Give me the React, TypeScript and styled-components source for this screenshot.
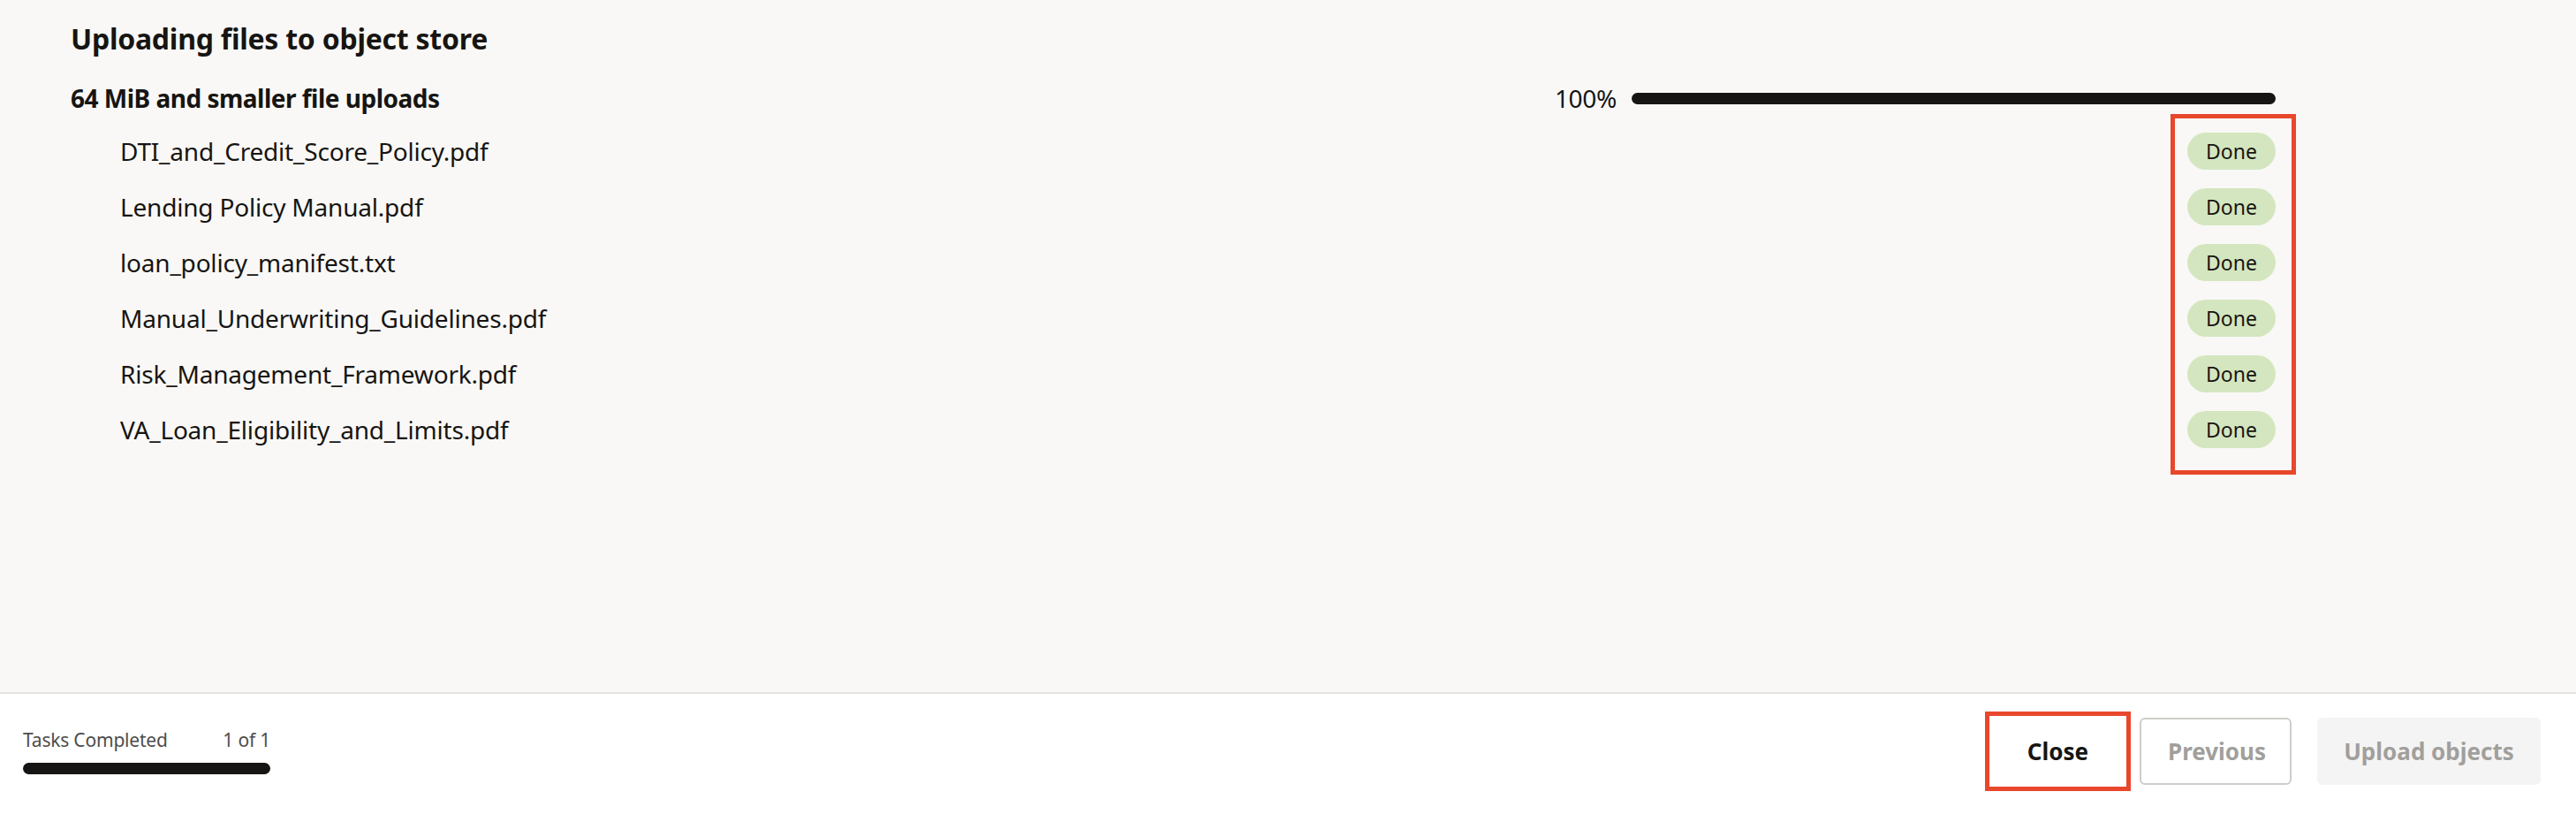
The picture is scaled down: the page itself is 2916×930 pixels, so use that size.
import React from "react";
import styled, { createGlobalStyle } from "styled-components";

const files = [
  "DTI_and_Credit_Score_Policy.pdf",
  "Lending Policy Manual.pdf",
  "loan_policy_manifest.txt",
  "Manual_Underwriting_Guidelines.pdf",
  "Risk_Management_Framework.pdf",
  "VA_Loan_Eligibility_and_Limits.pdf",
];

const GlobalStyle = createGlobalStyle`
  html, body {
    margin: 0;
    padding: 0;
    background: #ffffff;
  }
  body {
    font-family: "Noto Sans", "Open Sans", sans-serif;
    color: #161513;
  }
`;

const Page = styled.div`
  width: 2916px;
  height: 930px;
  display: flex;
  flex-direction: column;
`;

const Main = styled.main`
  flex: 1;
  background: #f9f8f6;
  padding: 24px 317px 0 80px;
  display: flex;
  flex-direction: column;
`;

const Title = styled.h1`
  margin: 0;
  height: 40px;
  line-height: 40px;
  font-size: 32px;
  font-weight: 700;
  letter-spacing: -0.25px;
`;

const SubRow = styled.div`
  margin-top: 29px;
  height: 36px;
  display: flex;
  align-items: center;
  justify-content: space-between;
  padding-right: 23px;
`;

const SubHeader = styled.h2`
  margin: 0;
  font-size: 28px;
  font-weight: 700;
  line-height: 36px;
  letter-spacing: -0.5px;
`;

const Progress = styled.div`
  display: flex;
  align-items: center;
  gap: 17px;
  font-size: 28px;
  letter-spacing: -0.3px;
`;

const Bar = styled.div<{ $width: number; $height?: number }>`
  width: ${(p) => p.$width}px;
  height: ${(p) => p.$height ?? 13}px;
  border-radius: 7px;
  background: #161513;
`;

const Body = styled.div`
  display: flex;
  justify-content: space-between;
  align-items: flex-start;
`;

const FileList = styled.ul`
  list-style: none;
  margin: 0;
  padding: 10px 0 0 56px;
`;

const Row = styled.li`
  height: 63px;
  display: flex;
  align-items: center;
  font-size: 28px;
  letter-spacing: -0.2px;
`;

const StatusBox = styled.div`
  border: 5px solid #e9472c;
  padding: 5px 18px 15px 14px;
  display: flex;
  flex-direction: column;
`;

const StatusCell = styled.div`
  height: 63px;
  display: flex;
  align-items: center;
`;

const Pill = styled.span`
  width: 100px;
  height: 42px;
  border-radius: 21px;
  background: #d4e6bf;
  display: flex;
  align-items: center;
  justify-content: center;
  font-size: 23px;
  color: #161513;
`;

const Footer = styled.footer`
  height: 147px;
  box-sizing: border-box;
  border-top: 2px solid #e5e3e0;
  background: #ffffff;
  padding: 0 40px 15px 26px;
  display: flex;
  align-items: center;
  justify-content: space-between;
`;

const Tasks = styled.div`
  width: 280px;
  display: flex;
  flex-direction: column;
  gap: 14px;
`;

const TasksLabel = styled.div`
  display: flex;
  justify-content: space-between;
  font-size: 21px;
  line-height: 24px;
  color: #4f4d4a;
  letter-spacing: -0.2px;
`;

const Actions = styled.div`
  display: flex;
  align-items: center;
`;

const Button = styled.button<{ $variant: "close" | "outline" | "disabled" }>`
  font-family: "Noto Sans", "Open Sans", sans-serif;
  font-size: 26px;
  font-weight: 700;
  box-sizing: border-box;
  height: ${(p) => (p.$variant === "close" ? 90 : 76)}px;
  padding: 0 30px;
  border-radius: ${(p) => (p.$variant === "close" ? 0 : 6)}px;
  cursor: pointer;
  ${(p) =>
    p.$variant === "close"
      ? `
    width: 165px;
    border: 5px solid #e9472c;
    background: #ffffff;
    color: #161513;
    margin-right: 10px;
  `
      : p.$variant === "outline"
      ? `
    width: 172px;
    border: 2px solid #cfcdca;
    background: #ffffff;
    color: #a19f9c;
    margin-right: 29px;
  `
      : `
    width: 253px;
    border: none;
    background: #f4f4f4;
    color: #a19f9c;
  `}
`;

export default function App() {
  return (
    <Page>
      <GlobalStyle />
      <Main>
        <Title>Uploading files to object store</Title>
        <SubRow>
          <SubHeader>64 MiB and smaller file uploads</SubHeader>
          <Progress>
            <span>100%</span>
            <Bar $width={729} />
          </Progress>
        </SubRow>
        <Body>
          <FileList>
            {files.map((f) => (
              <Row key={f}>{f}</Row>
            ))}
          </FileList>
          <StatusBox>
            {files.map((f) => (
              <StatusCell key={f}>
                <Pill>Done</Pill>
              </StatusCell>
            ))}
          </StatusBox>
        </Body>
      </Main>
      <Footer>
        <Tasks>
          <TasksLabel>
            <span>Tasks Completed</span>
            <span>1 of 1</span>
          </TasksLabel>
          <Bar $width={280} />
        </Tasks>
        <Actions>
          <Button $variant="close">Close</Button>
          <Button $variant="outline">Previous</Button>
          <Button $variant="disabled">Upload objects</Button>
        </Actions>
      </Footer>
    </Page>
  );
}
